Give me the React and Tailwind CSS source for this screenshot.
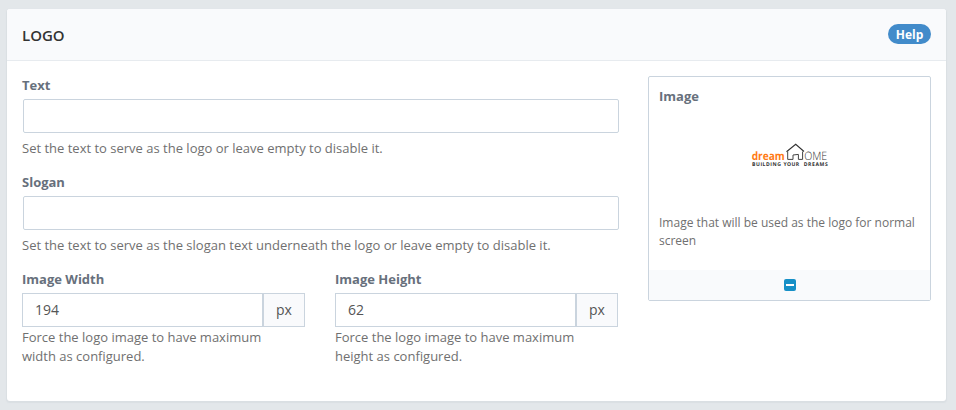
function Label({ children }) {
  return <label className="block h-[19px] text-[13px] leading-[19px] font-bold text-[#67707c]">{children}</label>;
}

function Help({ children, className = "" }) {
  return <p className={`text-[13px] leading-[19px] text-[#707070] ${className}`}>{children}</p>;
}

function TextField({ label, help }) {
  return (
    <div className="mb-[15px]">
      <Label>{label}</Label>
      <input className="mt-1 ml-px block h-[34px] w-[596px] rounded-xs border border-[#cad4de] bg-white px-3 text-sm" />
      <Help className="mt-1.5">{help}</Help>
    </div>
  );
}

function SizeField({ label, value, help }) {
  return (
    <div className="w-[283px]">
      <Label>{label}</Label>
      <div className="mt-1 flex h-[34px]">
        <input
          defaultValue={value}
          className="block w-[241px] border border-[#cad4de] bg-white px-3 text-sm text-[#555]"
        />
        <span className="flex w-[42px] items-center justify-center border border-[#cad4de] bg-[#f9fafc] text-sm text-[#555]">
          px
        </span>
      </div>
      <Help className="mt-px w-[250px]">{help}</Help>
    </div>
  );
}

function DreamHomeLogo() {
  return (
    <svg width="80" height="28" viewBox="0 0 80 28" className="block">
      <g style={{ textRendering: "geometricPrecision" }} fontFamily="Open Sans, sans-serif">
        <text x="1.7" y="17.6" fontSize="11.4" fontWeight="700" fill="#ff7a14" textLength="33" lengthAdjust="spacingAndGlyphs">
          dream
        </text>
        <text x="54.2" y="17.6" fontSize="11.6" fontWeight="300" fill="#333" textLength="23" lengthAdjust="spacingAndGlyphs">
          OME
        </text>
        <g fontSize="5.1" fontWeight="700" fill="#333">
          <text x="2" y="24.2" textLength="29">BUILDING</text>
          <text x="33.5" y="24.2" textLength="15.5">YOUR</text>
          <text x="53.7" y="24.2" textLength="24">DREAMS</text>
        </g>
      </g>
      <path d="M36.5 9.8 45.7 2.3 54 9.5" fill="none" stroke="#333" strokeWidth="1.1" />
      <path d="M37.7 9.5V17.4H43V13L48.4 12.4V17.4H52.6V9.5" fill="none" stroke="#444" strokeWidth="1" />
    </svg>
  );
}

export default function App() {
  return (
    <div className="h-[410px] w-[956px] overflow-hidden bg-[#e3e7ea] pt-[9px] pl-[7px] font-['Open_Sans',sans-serif]">
      <section className="h-[392px] w-[939px] overflow-hidden rounded-[3px] bg-white shadow-[0_1px_1px_1px_#dadfe3]">
        <header className="flex h-[52px] items-start justify-between border-b border-[#e7ebef] bg-[#f9fafc] pr-[15px] pl-[15px]">
          <h1 className="pt-[16px] text-[15px] leading-5 font-semibold text-[#333]">LOGO</h1>
          <button className="mt-[15px] h-5 w-[43px] rounded-full bg-[#428bca] pt-px text-center text-xs leading-5 font-bold text-white">
            Help
          </button>
        </header>
        <div className="flex pt-[15px] pl-[15px]">
          <div className="w-[626px]">
            <TextField label="Text" help="Set the text to serve as the logo or leave empty to disable it." />
            <TextField label="Slogan" help="Set the text to serve as the slogan text underneath the logo or leave empty to disable it." />
            <div className="flex gap-[30px]">
              <SizeField label="Image Width" value="194" help="Force the logo image to have maximum width as configured." />
              <SizeField label="Image Height" value="62" help="Force the logo image to have maximum height as configured." />
            </div>
          </div>
          <aside className="flex h-[225px] w-[283px] flex-col rounded-xs border border-[#cad4de]">
            <div className="flex-1 px-[10px] pt-[10px]">
              <Label>Image</Label>
              <div className="mt-[36px] flex justify-center">
                <DreamHomeLogo />
              </div>
              <p className="mt-[44px] text-xs leading-[18px] text-[#707070]">
                Image that will be used as the logo for normal screen
              </p>
            </div>
            <footer className="flex h-[30px] items-center justify-center bg-[#f9fafc]">
              <span className="flex size-3 items-center justify-center rounded-xs bg-[#1790c7]">
                <span className="h-0.5 w-2 bg-white" />
              </span>
            </footer>
          </aside>
        </div>
      </section>
    </div>
  );
}
